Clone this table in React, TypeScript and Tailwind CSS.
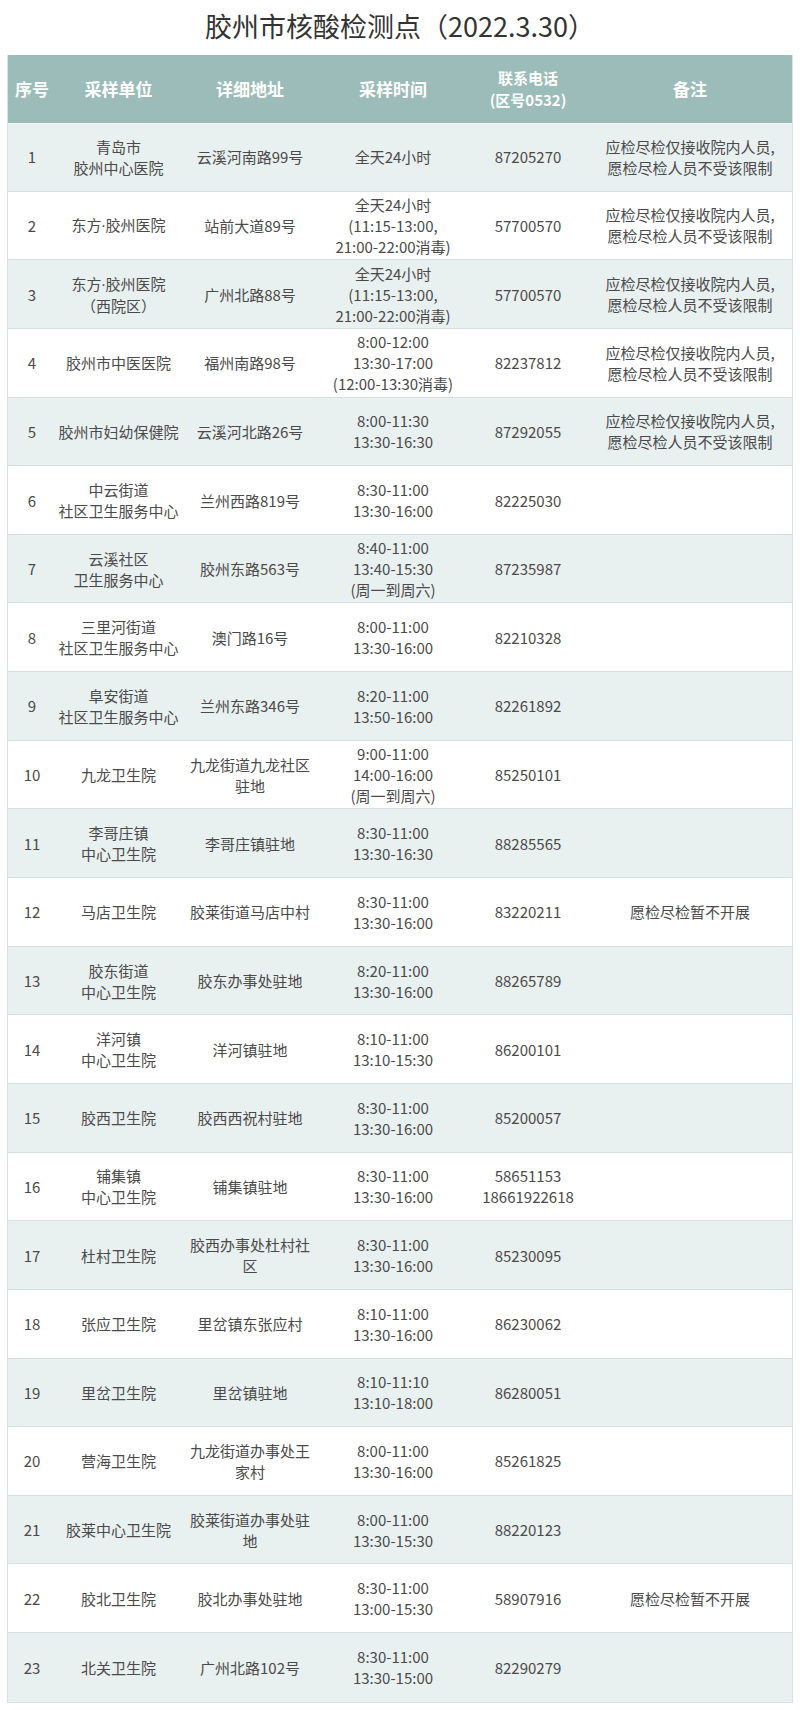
import React from "react";

type Row = {
  no: string;
  unit: string[];
  addr: string[];
  time: string[];
  phone: string[];
  note: string[];
};

const N1 = ["应检尽检仅接收院内人员,", "愿检尽检人员不受该限制"];
const N2 = ["愿检尽检暂不开展"];

const rows: Row[] = [
  { no: "1", unit: ["青岛市", "胶州中心医院"], addr: ["云溪河南路99号"], time: ["全天24小时"], phone: ["87205270"], note: N1 },
  { no: "2", unit: ["东方·胶州医院"], addr: ["站前大道89号"], time: ["全天24小时", "(11:15-13:00,", "21:00-22:00消毒)"], phone: ["57700570"], note: N1 },
  { no: "3", unit: ["东方·胶州医院", "（西院区）"], addr: ["广州北路88号"], time: ["全天24小时", "(11:15-13:00,", "21:00-22:00消毒)"], phone: ["57700570"], note: N1 },
  { no: "4", unit: ["胶州市中医医院"], addr: ["福州南路98号"], time: ["8:00-12:00", "13:30-17:00", "(12:00-13:30消毒)"], phone: ["82237812"], note: N1 },
  { no: "5", unit: ["胶州市妇幼保健院"], addr: ["云溪河北路26号"], time: ["8:00-11:30", "13:30-16:30"], phone: ["87292055"], note: N1 },
  { no: "6", unit: ["中云街道", "社区卫生服务中心"], addr: ["兰州西路819号"], time: ["8:30-11:00", "13:30-16:00"], phone: ["82225030"], note: [] },
  { no: "7", unit: ["云溪社区", "卫生服务中心"], addr: ["胶州东路563号"], time: ["8:40-11:00", "13:40-15:30", "(周一到周六)"], phone: ["87235987"], note: [] },
  { no: "8", unit: ["三里河街道", "社区卫生服务中心"], addr: ["澳门路16号"], time: ["8:00-11:00", "13:30-16:00"], phone: ["82210328"], note: [] },
  { no: "9", unit: ["阜安街道", "社区卫生服务中心"], addr: ["兰州东路346号"], time: ["8:20-11:00", "13:50-16:00"], phone: ["82261892"], note: [] },
  { no: "10", unit: ["九龙卫生院"], addr: ["九龙街道九龙社区", "驻地"], time: ["9:00-11:00", "14:00-16:00", "(周一到周六)"], phone: ["85250101"], note: [] },
  { no: "11", unit: ["李哥庄镇", "中心卫生院"], addr: ["李哥庄镇驻地"], time: ["8:30-11:00", "13:30-16:30"], phone: ["88285565"], note: [] },
  { no: "12", unit: ["马店卫生院"], addr: ["胶莱街道马店中村"], time: ["8:30-11:00", "13:30-16:00"], phone: ["83220211"], note: N2 },
  { no: "13", unit: ["胶东街道", "中心卫生院"], addr: ["胶东办事处驻地"], time: ["8:20-11:00", "13:30-16:00"], phone: ["88265789"], note: [] },
  { no: "14", unit: ["洋河镇", "中心卫生院"], addr: ["洋河镇驻地"], time: ["8:10-11:00", "13:10-15:30"], phone: ["86200101"], note: [] },
  { no: "15", unit: ["胶西卫生院"], addr: ["胶西西祝村驻地"], time: ["8:30-11:00", "13:30-16:00"], phone: ["85200057"], note: [] },
  { no: "16", unit: ["铺集镇", "中心卫生院"], addr: ["铺集镇驻地"], time: ["8:30-11:00", "13:30-16:00"], phone: ["58651153", "18661922618"], note: [] },
  { no: "17", unit: ["杜村卫生院"], addr: ["胶西办事处杜村社", "区"], time: ["8:30-11:00", "13:30-16:00"], phone: ["85230095"], note: [] },
  { no: "18", unit: ["张应卫生院"], addr: ["里岔镇东张应村"], time: ["8:10-11:00", "13:30-16:00"], phone: ["86230062"], note: [] },
  { no: "19", unit: ["里岔卫生院"], addr: ["里岔镇驻地"], time: ["8:10-11:10", "13:10-18:00"], phone: ["86280051"], note: [] },
  { no: "20", unit: ["营海卫生院"], addr: ["九龙街道办事处王", "家村"], time: ["8:00-11:00", "13:30-16:00"], phone: ["85261825"], note: [] },
  { no: "21", unit: ["胶莱中心卫生院"], addr: ["胶莱街道办事处驻", "地"], time: ["8:00-11:00", "13:30-15:30"], phone: ["88220123"], note: [] },
  { no: "22", unit: ["胶北卫生院"], addr: ["胶北办事处驻地"], time: ["8:30-11:00", "13:00-15:30"], phone: ["58907916"], note: N2 },
  { no: "23", unit: ["北关卫生院"], addr: ["广州北路102号"], time: ["8:30-11:00", "13:30-15:00"], phone: ["82290279"], note: [] },
];

const grid = "grid grid-cols-[48px_125px_138px_148px_122px_202px]";

function Line({ text }: { text: string }) {
  if (!text.includes("·")) return <span>{text}</span>;
  const [a, b] = text.split("·");
  return (
    <span>
      {a}
      <span style={{ fontFamily: '"Open Sans", sans-serif' }}>·</span>
      {b}
    </span>
  );
}

function Cell({ lines }: { lines: string[] }) {
  return (
    <div className="flex flex-col items-center justify-center text-center leading-[21px] whitespace-nowrap">
      {lines.map((l, i) => (
        <Line key={i} text={l} />
      ))}
    </div>
  );
}

export default function App() {
  return (
    <div
      className="w-[800px] h-[1710px] bg-white"
      style={{ fontFamily: '"Noto Sans CJK SC", "Noto Sans", sans-serif' }}
    >
      <div className="h-[55px] flex items-center justify-center pb-[4px]">
        <h1 className="text-[27px] leading-none text-[#333333] font-normal">
          胶州市核酸检测点（2022.3.30）
        </h1>
      </div>
      <div className="mx-[7px] w-[786px] border border-t-0 border-[#d9e2e3]">
        <div className={`${grid} h-[68px] bg-[#9bbcb8] text-white font-bold text-[17px]`}>
          <div className="flex items-center justify-center">序号</div>
          <div className="flex items-center justify-center">采样单位</div>
          <div className="flex items-center justify-center">详细地址</div>
          <div className="flex items-center justify-center">采样时间</div>
          <div className="flex flex-col items-center justify-center text-[15px] leading-[22px]">
            <span>联系电话</span>
            <span>(区号0532)</span>
          </div>
          <div className="flex items-center justify-center">备注</div>
        </div>
        {rows.map((r, i) => (
          <div
            key={r.no}
            className={`${grid} h-[68.65px] border-b border-[#d6e0e1] last:border-b-0 text-[15px] text-[#4a4a4a] ${
              i % 2 === 0 ? "bg-[#e9f0f0]" : "bg-white"
            }`}
          >
            <Cell lines={[r.no]} />
            <Cell lines={r.unit} />
            <Cell lines={r.addr} />
            <Cell lines={r.time} />
            <Cell lines={r.phone} />
            <Cell lines={r.note} />
          </div>
        ))}
      </div>
    </div>
  );
}
